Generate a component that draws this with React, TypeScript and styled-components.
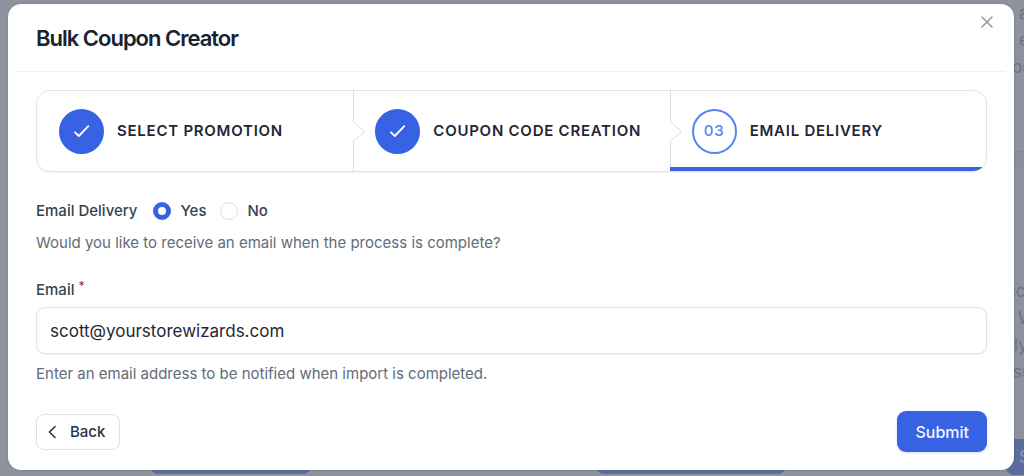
import React, { useState } from "react";
import styled, { createGlobalStyle } from "styled-components";

const GlobalStyle = createGlobalStyle`
  *, *::before, *::after { box-sizing: border-box; }
  body {
    margin: 0;
    background: #8e929f;
    font-family: Inter, "Liberation Sans", sans-serif;
    font-size: 15px;
    line-height: 24px;
    color: #374151;
  }
  p, h1, ol, fieldset { margin: 0; padding: 0; border: 0; }
  button, input { font: inherit; }
`;

const Screen = styled.div`
  position: relative;
  min-height: 100vh;
  padding: 4px 10px 6px 8px;
`;

const Backdrop = styled.div`
  position: absolute;
  inset: 0;
  display: flex;
  align-items: stretch;
  overflow: hidden;
  color: #6d717e;
  font-size: 17px;
`;

const DimActions = styled.div`
  flex: 1;
  min-width: 0;
  display: flex;
  align-items: flex-end;
  justify-content: space-between;
  padding: 0 220px 2px 150px;
`;

const DimButton = styled.span<{ $width: number }>`
  flex: none;
  width: ${(p) => p.$width}px;
  height: 36px;
  margin-top: auto;
  padding: 6px 13px;
  border-radius: 8px;
  background: #5c6c9c;
  color: #8e96b4;
`;

const DimColumn = styled.div`
  flex: none;
  width: 18px;
  display: flex;
  flex-direction: column;
  padding-bottom: 1px;
`;

const DimText = styled.div`
  line-height: 27px;
`;

const DimBand = styled.div`
  height: 18px;
  margin: 70px 0 109px;
  border-top: 1px solid #858996;
  background: #8b8f9c;
`;

const DimLine = styled.p<{ $indent: number }>`
  padding-left: ${(p) => p.$indent}px;
`;

const Dialog = styled.section`
  position: relative;
  border-radius: 13px;
  background: #fff;
  box-shadow: 0 0 2px rgba(31, 41, 55, 0.3);
`;

const Header = styled.header`
  display: flex;
  align-items: flex-start;
  justify-content: space-between;
  margin: 0 9px;
  padding: 9px 9px 18px 19px;
  border-bottom: 1px solid #f0f1f3;
`;

const Title = styled.h1`
  padding-top: 10px;
  font-size: 22px;
  line-height: 30px;
  font-weight: 600;
  letter-spacing: -1px;
  color: #1a2130;
`;

const CloseButton = styled.button`
  width: 18px;
  height: 18px;
  padding: 0;
  border: 0;
  background: none;
  color: #8f96a3;
  cursor: pointer;
  svg { display: block; }
`;

const Form = styled.form`
  padding: 18px 27px 18px 28px;
`;

const Steps = styled.ol`
  display: grid;
  grid-template-columns: repeat(3, 1fr);
  height: 82px;
  list-style: none;
  border: 1px solid #e2e4e8;
  border-radius: 14px;
  box-shadow: 0 1px 2px rgba(0, 0, 0, 0.06);
  overflow: hidden;
`;

const Step = styled.li<{ $current?: boolean }>`
  position: relative;
  display: flex;
  align-items: center;
  gap: 13px;
  padding-left: 22px;
  font-weight: 600;
  letter-spacing: 0.05em;
  color: #1f2737;
  white-space: nowrap;
  ${(p) =>
    p.$current &&
    `&::after {
      content: "";
      position: absolute;
      left: 0;
      right: 0;
      bottom: 0;
      height: 4px;
      background: #3662e3;
    }`}
`;

const StepMark = styled.span<{ $done?: boolean }>`
  display: flex;
  align-items: center;
  justify-content: center;
  width: 45px;
  height: 45px;
  border-radius: 50%;
  border: 2px solid ${(p) => (p.$done ? "#3662e3" : "#5585ef")};
  background: ${(p) => (p.$done ? "#3662e3" : "#fff")};
  color: ${(p) => (p.$done ? "#fff" : "#5585ef")};
  font-weight: 500;
`;

const Separator = styled.svg`
  position: absolute;
  top: 0;
  left: 0;
`;

const Choices = styled.fieldset`
  display: flex;
  align-items: center;
  min-width: 0;
  margin-top: 27px;
  font-weight: 500;
`;

const ChoiceTitle = styled.span`
  margin-right: 16px;
`;

const Choice = styled.label`
  display: flex;
  align-items: center;
  gap: 9px;
  margin-right: 14px;
`;

const Radio = styled.input`
  appearance: none;
  width: 18px;
  height: 18px;
  margin: 0;
  border: 1px solid #dcdfe4;
  border-radius: 50%;
  background: #fff;
  &:checked { border: 5px solid #3662e3; }
`;

const Hint = styled.p`
  margin-top: 8px;
  color: #636b79;
`;

const Label = styled.label`
  display: flex;
  gap: 4px;
  margin-top: 23px;
  font-weight: 500;
`;

const Required = styled.span`
  font-size: 12px;
  line-height: 16px;
  color: #c5304a;
`;

const EmailInput = styled.input`
  display: block;
  width: 100%;
  height: 47px;
  margin-top: 5px;
  padding: 0 13px;
  border: 1px solid #dfe1e5;
  border-radius: 9px;
  outline: 0;
  background: #fff;
  color: #1f2737;
  font-size: 17px;
  box-shadow: 0 1px 2px rgba(0, 0, 0, 0.06);
`;

const Footer = styled.footer`
  display: flex;
  align-items: center;
  justify-content: space-between;
  margin-top: 25px;
`;

const BackButton = styled.button`
  display: flex;
  align-items: center;
  gap: 14px;
  height: 36px;
  padding: 0 14px 0 11px;
  border: 1px solid #dfe1e5;
  border-radius: 8px;
  background: #fff;
  color: #2a3343;
  font-weight: 500;
`;

const SubmitButton = styled.button`
  height: 41px;
  padding: 0 18px;
  border: 0;
  border-radius: 9px;
  background: #3662e3;
  color: #f4f6fe;
  font-size: 16px;
  font-weight: 500;
  box-shadow: 0 1px 3px rgba(0, 0, 0, 0.15);
`;

const Check = () => (
  <svg width="18" height="14" viewBox="0 0 18 14" fill="none" stroke="currentColor" strokeWidth="1.8" strokeLinecap="round" strokeLinejoin="round" aria-hidden="true">
    <path d="M2 8.300 L5.800 12 L15.300 2.200" />
  </svg>
);

const Chevron = () => (
  <Separator width="13" height="80" viewBox="0 0 13 80" fill="none" stroke="#d8dbe1" aria-hidden="true">
    <path d="M.5 0 V31 L11.500 40.500 L.5 50 V80" />
  </Separator>
);

const steps = [
  { name: "SELECT PROMOTION", done: true },
  { name: "COUPON CODE CREATION", done: true },
  { name: "EMAIL DELIVERY", done: false },
];

export default function App() {
  const [notify, setNotify] = useState(true);
  const [email, setEmail] = useState("scott@yourstorewizards.com");

  return (
    <Screen>
      <GlobalStyle />
      <Backdrop aria-hidden="true">
        <DimActions>
          <DimButton $width={161} />
          <DimButton $width={190} />
        </DimActions>
        <DimColumn>
          <DimText>
            <DimLine $indent={13}>a</DimLine>
            <DimLine $indent={13}>e</DimLine>
            <DimLine $indent={6}>ou</DimLine>
          </DimText>
          <DimBand />
          <DimText>
            <DimLine $indent={0}>cc</DimLine>
            <DimLine $indent={12}>W</DimLine>
            <DimLine $indent={8}>ly</DimLine>
            <DimLine $indent={7}>su</DimLine>
          </DimText>
          <DimButton $width={80}>S</DimButton>
        </DimColumn>
      </Backdrop>
      <Dialog role="dialog" aria-labelledby="dialog-title">
        <Header>
          <Title id="dialog-title">Bulk Coupon Creator</Title>
          <CloseButton type="button" aria-label="Close">
            <svg width="18" height="18" viewBox="0 0 18 18" fill="none" stroke="currentColor" strokeWidth="1.5" strokeLinecap="round">
              <path d="M4 4 L14 14 M14 4 L4 14" />
            </svg>
          </CloseButton>
        </Header>
        <Form onSubmit={(e) => e.preventDefault()}>
          <Steps>
            {steps.map((step, i) => (
              <Step key={step.name} $current={!step.done}>
                {i > 0 && <Chevron />}
                <StepMark $done={step.done}>{step.done ? <Check /> : `0${i + 1}`}</StepMark>
                {step.name}
              </Step>
            ))}
          </Steps>
          <Choices aria-label="Email Delivery">
            <ChoiceTitle>Email Delivery</ChoiceTitle>
            <Choice>
              <Radio type="radio" name="notify" checked={notify} onChange={() => setNotify(true)} />
              Yes
            </Choice>
            <Choice>
              <Radio type="radio" name="notify" checked={!notify} onChange={() => setNotify(false)} />
              No
            </Choice>
          </Choices>
          <Hint>Would you like to receive an email when the process is complete?</Hint>
          <Label htmlFor="email">
            Email<Required>*</Required>
          </Label>
          <EmailInput id="email" type="email" required value={email} onChange={(e) => setEmail(e.target.value)} />
          <Hint>Enter an email address to be notified when import is completed.</Hint>
          <Footer>
            <BackButton type="button">
              <svg width="8" height="14" viewBox="0 0 8 14" fill="none" stroke="currentColor" strokeWidth="1.6" strokeLinecap="round" strokeLinejoin="round" aria-hidden="true">
                <path d="M7 1.500 L1.500 7 L7 12.500" />
              </svg>
              Back
            </BackButton>
            <SubmitButton type="submit">Submit</SubmitButton>
          </Footer>
        </Form>
      </Dialog>
    </Screen>
  );
}
